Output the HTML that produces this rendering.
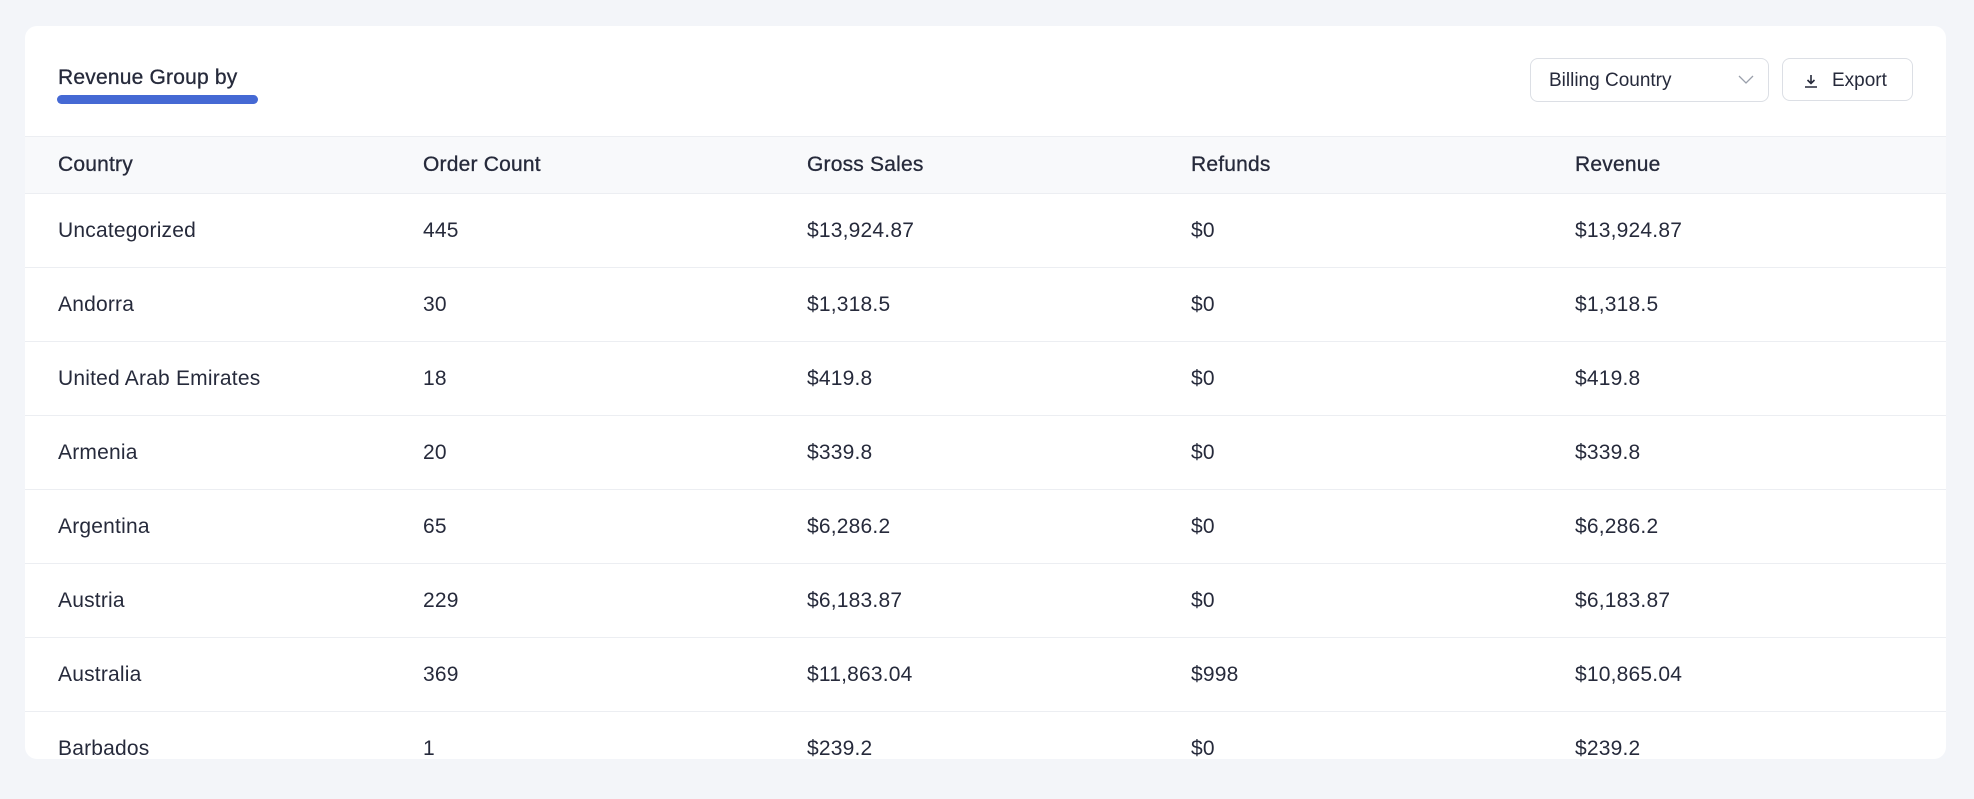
<!DOCTYPE html>
<html><head><style>
*{margin:0;padding:0;box-sizing:border-box}
body{width:1974px;height:799px;background:#f3f5f9;font-family:"Liberation Sans",sans-serif;color:#262a3b;position:relative;overflow:hidden}
.card{position:absolute;left:25px;top:26px;width:1921px;height:733px;background:#fff;border-radius:12px;overflow:hidden}
.title{position:absolute;left:33px;top:40px;font-size:21px;color:#262a3b;-webkit-text-stroke:0.3px #262a3b;letter-spacing:0.2px}
.ul{position:absolute;left:32px;top:69px;width:201px;height:9px;background:#4569d4;border-radius:5px}
.sel{position:absolute;left:1505px;top:32px;width:239px;height:44px;border:1px solid #dcdfe5;border-radius:8px;font-size:19px;padding:11px 18px}
.sel svg{position:absolute;right:14px;top:16px}
.exp{position:absolute;left:1757px;top:32px;width:131px;height:43px;border:1px solid #dcdfe5;border-radius:8px;font-size:19px;padding:11px 0 0 49px}
.exp svg{position:absolute;left:20px;top:14px}
table{position:absolute;left:0;top:110px;width:100%;border-collapse:collapse;font-size:21px}
th{font-weight:normal;text-align:left;height:57px;background:#f8f9fb;border-top:1px solid #eceef2;border-bottom:1px solid #eceef2;color:#262a3b;-webkit-text-stroke:0.3px #262a3b;letter-spacing:0.2px}
td{height:74px;border-bottom:1px solid #eceef2;letter-spacing:0.2px}
th:first-child,td:first-child{padding-left:33px}
</style></head><body>
<div class="card">
<div class="title">Revenue Group by</div>
<div class="ul"></div>
<div class="sel">Billing Country<svg width="16" height="10" viewBox="0 0 16 10"><path d="M1 1l7 7 7-7" fill="none" stroke="#9aa0ab" stroke-width="1.3"/></svg></div>
<div class="exp"><svg width="16" height="16" viewBox="0 0 16 16"><path d="M8 2v8M4.5 7l3.5 3.5L11.5 7M2 14h12" fill="none" stroke="#262a3b" stroke-width="1.6"/></svg>Export</div>
<table>
<colgroup><col style="width:398px"><col style="width:384px"><col style="width:384px"><col style="width:384px"><col></colgroup>
<tr><th>Country</th><th>Order Count</th><th>Gross Sales</th><th>Refunds</th><th>Revenue</th></tr>
<tr><td>Uncategorized</td><td>445</td><td>$13,924.87</td><td>$0</td><td>$13,924.87</td></tr>
<tr><td>Andorra</td><td>30</td><td>$1,318.5</td><td>$0</td><td>$1,318.5</td></tr>
<tr><td>United Arab Emirates</td><td>18</td><td>$419.8</td><td>$0</td><td>$419.8</td></tr>
<tr><td>Armenia</td><td>20</td><td>$339.8</td><td>$0</td><td>$339.8</td></tr>
<tr><td>Argentina</td><td>65</td><td>$6,286.2</td><td>$0</td><td>$6,286.2</td></tr>
<tr><td>Austria</td><td>229</td><td>$6,183.87</td><td>$0</td><td>$6,183.87</td></tr>
<tr><td>Australia</td><td>369</td><td>$11,863.04</td><td>$998</td><td>$10,865.04</td></tr>
<tr><td>Barbados</td><td>1</td><td>$239.2</td><td>$0</td><td>$239.2</td></tr>
</table>
</div>
</body></html>
